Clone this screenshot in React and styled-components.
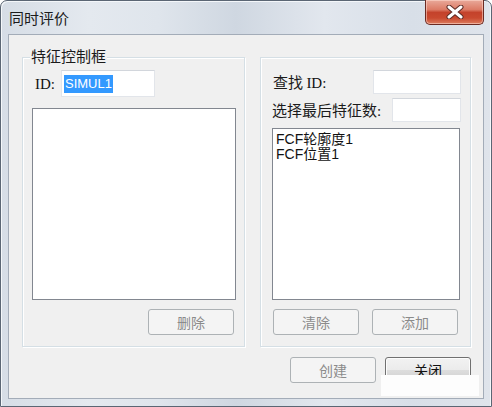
import React from "react";
import styled, { createGlobalStyle } from "styled-components";

const GlobalStyle = createGlobalStyle`
  html, body { margin: 0; padding: 0; background: #ffffff; }
  body { font-family: "Noto Sans CJK SC", sans-serif; }
  * { box-sizing: border-box; }
`;

const Window = styled.div`
  position: relative;
  width: 492px;
  height: 407px;
  display: flex;
  flex-direction: column;
  border: 1px solid #5b6674;
  border-radius: 7px 7px 0 0;
  background: linear-gradient(90deg, #d6dde6 0%, #e4e9ef 18%, #dfe5ec 32%, #cfd7e1 48%, #e2e7ee 66%, #d8dfe8 84%, #dfe4eb 100%);
  box-shadow: inset 1px 1px 0 #f4f7fa, inset -1px 0 0 #f4f7fa;
`;

const TitleBar = styled.div`
  height: 33px;
  flex: none;
  display: flex;
  align-items: flex-start;
  justify-content: space-between;
`;

const Title = styled.div`
  padding: 7px 0 0 8px;
  font-size: 15px;
  line-height: 20px;
  color: #1b1b1b;
`;

const CloseButton = styled.div`
  width: 59px;
  height: 25px;
  margin: -1px 7px 0 0;
  border: 1px solid #6b2a22;
  border-top: none;
  border-radius: 0 0 5px 5px;
  background: linear-gradient(180deg, #e9a99a 0%, #dc7b66 40%, #c4422b 52%, #c9492f 75%, #dc7d5f 100%);
  box-shadow: inset 0 0 0 1px rgba(255, 220, 210, 0.55);
  display: flex;
  align-items: center;
  justify-content: center;
`;

const Client = styled.div`
  flex: 1;
  margin: 0 7px 7px 7px;
  border: 1px solid #a3acb8;
  background: #f0f0f0;
  display: flex;
  flex-direction: column;
`;

const GroupsRow = styled.div`
  display: flex;
  gap: 15px;
  margin-top: 22px;
  padding-left: 13px;
`;

const Group = styled.div`
  position: relative;
  width: ${(p) => p.$w}px;
  height: 290px;
  border: 1px solid #d5dfe5;
  box-shadow: inset 1px 1px 0 #ffffff, 1px 1px 0 #ffffff;
  display: flex;
  flex-direction: column;
  padding: ${(p) => p.$pad};
`;

const GroupLabel = styled.div`
  position: absolute;
  left: 7px;
  top: -12px;
  padding: 0 1px;
  background: #f0f0f0;
  font-size: 15px;
  line-height: 20px;
  color: #1b1b1b;
`;

const FieldRow = styled.div`
  display: flex;
  align-items: center;
  height: ${(p) => p.$h}px;
  margin-top: ${(p) => p.$mt || 0}px;
  width: ${(p) => p.$w}px;
  justify-content: space-between;
`;

const Label = styled.span`
  font-size: 15px;
  line-height: 20px;
  color: #1b1b1b;
  margin-left: ${(p) => p.$ml || 0}px;
  white-space: nowrap;
`;

const Latin = styled.span`
  font-family: "Liberation Serif", "DejaVu Serif", serif;
  font-size: 15px;
  color: #111;
`;

const Edit = styled.div`
  width: ${(p) => p.$w}px;
  height: ${(p) => p.$h}px;
  background: #ffffff;
  border: 1px solid #e2e5ea;
  border-top-color: #d2d6dc;
  display: flex;
  align-items: center;
  padding-left: 2px;
`;

const Selected = styled.span`
  background: #3399ff;
  color: #ffffff;
  font-family: "Liberation Sans", Arial, sans-serif;
  font-size: 13px;
  line-height: 18px;
  padding: 0 1px;
`;

const ListBox = styled.div`
  width: ${(p) => p.$w}px;
  height: ${(p) => p.$h}px;
  margin-top: ${(p) => p.$mt}px;
  background: #ffffff;
  border: 1px solid #828790;
  padding: 3px 0 0 3px;
  display: flex;
  flex-direction: column;
`;

const ListItem = styled.div`
  font-family: "Liberation Sans", "Noto Sans CJK SC", sans-serif;
  font-size: 14px;
  line-height: 15px;
  color: #111;
`;

const ButtonRow = styled.div`
  display: flex;
  gap: ${(p) => p.$gap || 0}px;
  margin-top: ${(p) => p.$mt || 0}px;
  margin-left: ${(p) => p.$ml || 0}px;
  align-self: ${(p) => p.$align || "flex-start"};
  margin-right: ${(p) => p.$mr || 0}px;
`;

const Button = styled.div`
  width: 86px;
  height: 26px;
  border-radius: 3px;
  display: flex;
  align-items: center;
  justify-content: center;
  font-size: 14px;
  line-height: 20px;
  border: 1px solid ${(p) => (p.$enabled ? "#707070" : "#adb2b5")};
  color: ${(p) => (p.$enabled ? "#111" : "#8b8b8b")};
  background: ${(p) =>
    p.$enabled
      ? "linear-gradient(180deg, #f2f2f2 0%, #ebebeb 50%, #dddddd 51%, #cfcfcf 100%)"
      : "#f4f4f4"};
  box-shadow: inset 0 0 0 1px ${(p) => (p.$enabled ? "#fcfcfc" : "#f4f4f4")};
`;

const BottomRow = styled.div`
  display: flex;
  justify-content: flex-end;
  gap: 9px;
  margin-top: 10px;
  padding-right: 12px;
`;

const Patch = styled.div`
  position: absolute;
  left: 380px;
  top: 374px;
  width: 98px;
  height: 21px;
  background: #fdfdfd;
`;

export default function App() {
  return (
    <>
      <GlobalStyle />
      <Window>
        <TitleBar>
          <Title>同时评价</Title>
          <CloseButton>
            <svg width="20" height="14" viewBox="0 0 20 14">
              <path d="M4 2 L16 12 M16 2 L4 12" stroke="#5a2a24" strokeWidth="5" strokeLinecap="round" />
              <path d="M4 2 L16 12 M16 2 L4 12" stroke="#ffffff" strokeWidth="3" strokeLinecap="round" />
            </svg>
          </CloseButton>
        </TitleBar>
        <Client>
          <GroupsRow>
            <Group $w={223} $pad="12px 8px 0 9px">
              <GroupLabel>特征控制框</GroupLabel>
              <FieldRow $h={27} $w={123}>
                <Label $ml={3}>
                  <Latin>ID:</Latin>
                </Label>
                <Edit $w={94} $h={27}>
                  <Selected>SIMUL1</Selected>
                </Edit>
              </FieldRow>
              <ListBox $w={204} $h={192} $mt={11} />
              <ButtonRow $mt={9} $align="flex-end" $mr={2}>
                <Button>删除</Button>
              </ButtonRow>
            </Group>
            <Group $w={211} $pad="12px 0 0 11px">
              <FieldRow $h={24} $w={189}>
                <Label $ml={1}>
                  查找 <Latin>ID:</Latin>
                </Label>
                <Edit $w={88} $h={24} />
              </FieldRow>
              <FieldRow $h={24} $w={189} $mt={4}>
                <Label>
                  选择最后特征数<Latin>:</Latin>
                </Label>
                <Edit $w={69} $h={24} />
              </FieldRow>
              <ListBox $w={188} $h={172} $mt={6}>
                <ListItem>FCF轮廓度1</ListItem>
                <ListItem>FCF位置1</ListItem>
              </ListBox>
              <ButtonRow $mt={9} $ml={1} $gap={13}>
                <Button>清除</Button>
                <Button>添加</Button>
              </ButtonRow>
            </Group>
          </GroupsRow>
          <BottomRow>
            <Button>创建</Button>
            <Button $enabled>关闭</Button>
          </BottomRow>
        </Client>
        <Patch />
      </Window>
    </>
  );
}
